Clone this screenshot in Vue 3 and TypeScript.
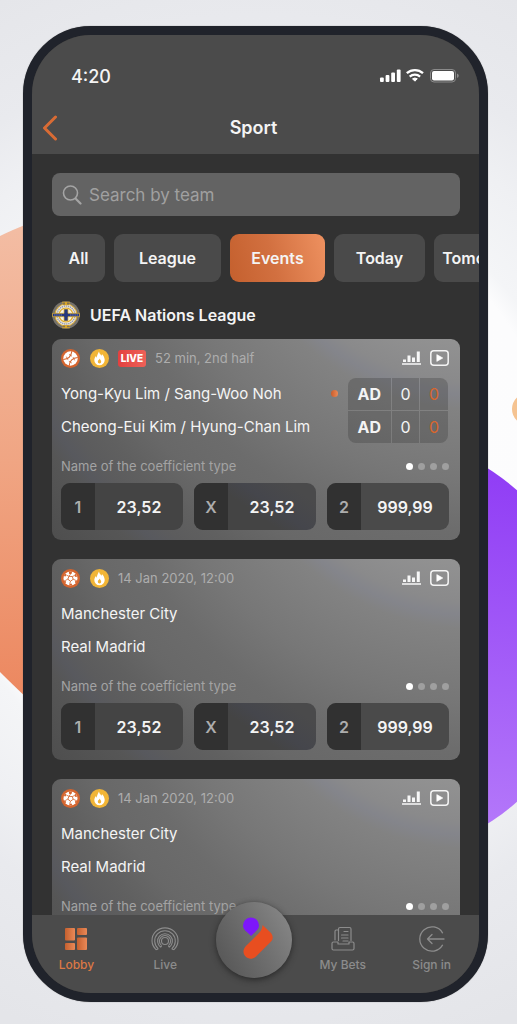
<script setup lang="ts">
import { ref } from 'vue'

interface Match {
  id: number
  sport: 'tennis' | 'football'
  live: boolean
  time: string
  teams: [string, string]
  scores: string[][]
}

interface Chip {
  label: string
  size: string
}

const chips: Chip[] = [
  { label: 'All', size: 'chip-xs' },
  { label: 'League', size: 'chip-lg' },
  { label: 'Events', size: 'chip-md' },
  { label: 'Today', size: 'chip-sm' },
  { label: 'Tomorrow', size: 'chip-md' },
]

const matches: Match[] = [
  {
    id: 1,
    sport: 'tennis',
    live: true,
    time: '52 min, 2nd half',
    teams: ['Yong-Kyu Lim / Sang-Woo Noh', 'Cheong-Eui Kim / Hyung-Chan Lim'],
    scores: [['AD', '0', '0'], ['AD', '0', '0']],
  },
  { id: 2, sport: 'football', live: false, time: '14 Jan 2020, 12:00', teams: ['Manchester City', 'Real Madrid'], scores: [] },
  { id: 3, sport: 'football', live: false, time: '14 Jan 2020, 12:00', teams: ['Manchester City', 'Real Madrid'], scores: [] },
]

const odds = [
  { key: '1', value: '23,52' },
  { key: 'X', value: '23,52' },
  { key: '2', value: '999,99' },
]

const activeChip = ref('Events')
const query = ref('')
</script>

<template>
  <div class="page">
    <svg class="backdrop" viewBox="0 0 517 1024" preserveAspectRatio="none" aria-hidden="true">
      <defs>
        <linearGradient id="peach" x1="0" y1="0" x2="0" y2="1">
          <stop offset="0" stop-color="#f3bda4" />
          <stop offset="0.5" stop-color="#f0a583" />
          <stop offset="1" stop-color="#ec875f" />
        </linearGradient>
        <linearGradient id="violet" gradientUnits="userSpaceOnUse" x1="520" y1="470" x2="480" y2="830">
          <stop offset="0" stop-color="#903df5" />
          <stop offset="1" stop-color="#b478fa" />
        </linearGradient>
      </defs>
      <path d="M0 236Q12 230 30 223V701Q12 684 0 672Z" fill="url(#peach)" />
      <circle cx="376" cy="646" r="210" fill="url(#violet)" />
      <circle cx="528" cy="409" r="16" fill="#f5c391" />
    </svg>

    <main class="phone">
      <header class="top">
        <div class="status">
          <span class="clock">4:20</span>
          <svg class="status-icons" width="80" height="16" viewBox="0 0 80 16" aria-hidden="true">
            <g fill="#fff">
              <rect x="1" y="9.500" width="3.800" height="4.500" rx="1" />
              <rect x="6.600" y="7" width="3.800" height="7" rx="1" />
              <rect x="12.200" y="4.500" width="3.800" height="9.500" rx="1" />
              <rect x="17.800" y="1.500" width="3.800" height="12.500" rx="1" />
              <path d="M33.500 10.800q2.400-1.600 4.800 0l-2.400 2.400z" stroke="#fff" stroke-width="1" stroke-linejoin="round" />
            </g>
            <g fill="none" stroke="#fff" stroke-width="2.300">
              <path d="M27.800 5.200a12 12 0 0 1 16.200 0" />
              <path d="M30.700 8.600a8 8 0 0 1 10.400 0" />
            </g>
            <rect x="51.500" y="1.500" width="25" height="12.500" rx="3.500" fill="none" stroke="#8a8a8a" />
            <rect x="53" y="3" width="22" height="9.500" rx="2" fill="#fff" />
            <path d="M78 5.500v4.500q1.800-.6 1.800-2.200T78 5.500z" fill="#8a8a8a" />
          </svg>
        </div>
        <div class="title-bar">
          <button class="back" type="button" aria-label="Back">
            <svg width="16" height="26" viewBox="0 0 16 26"><path d="M13.500 2L2.500 13l11 11" fill="none" stroke="#d96b34" stroke-width="3" stroke-linecap="round" stroke-linejoin="round" /></svg>
          </button>
          <h1>Sport</h1>
        </div>
      </header>

      <section class="content">
        <div class="search">
          <svg width="20" height="20" viewBox="0 0 20 20" fill="none" stroke="#a4a4a4" stroke-linecap="round" aria-hidden="true">
            <circle cx="8.500" cy="8" r="7" stroke-width="1.600" />
            <path d="M13.500 13.500l5 5" stroke-width="2.200" />
          </svg>
          <input v-model="query" type="text" placeholder="Search by team" aria-label="Search by team" />
        </div>

        <nav class="chips" aria-label="Filters">
          <button
            v-for="chip in chips"
            :key="chip.label"
            type="button"
            class="chip"
            :class="[chip.size, { active: chip.label === activeChip }]"
            @click="activeChip = chip.label"
          >{{ chip.label }}</button>
        </nav>

        <h2 class="league">
          <svg width="28" height="28" viewBox="0 0 28 28" aria-hidden="true">
            <circle cx="14" cy="14" r="13.800" fill="#77736c" />
            <circle cx="14" cy="14" r="11" fill="#e9e5da" stroke="#dda929" stroke-width="1" />
            <circle cx="14" cy="14" r="9" fill="none" stroke="#9c9cab" stroke-width="1.400" stroke-dasharray="1.300 .8" />
            <circle cx="14" cy="14" r="7" fill="#f6f1e4" stroke="#e2ab25" stroke-width="1.200" />
            <path d="M10 .8h8l-1.500 3.500h-5zM11.500 24h5l1.500 3.200h-8z" fill="#d9a629" />
            <path d="M11.500 1.500h1v2h-1zm4 0h1v2h-1zm-4 23.200h1v1.500h-1zm4 0h1v1.500h-1z" fill="#343e72" />
            <path d="M12 8h4v4.300h11.500v3.400H16V20h-4v-4.300H.5v-3.400H12z" fill="#26377e" stroke="#e6b62e" stroke-width=".7" />
            <path d="M2 14h8m8 0h8" stroke="#7780a9" stroke-width="1" stroke-dasharray="1.500 .7" />
          </svg>
          UEFA Nations League
        </h2>

        <div class="cards">
          <article v-for="match in matches" :key="match.id" class="card">
            <div class="meta">
              <svg v-if="match.sport === 'tennis'" width="19" height="19" viewBox="0 0 19 19" aria-label="Tennis">
                <circle cx="9.500" cy="9.500" r="9.500" fill="#d4652f" />
                <circle cx="9.500" cy="9.500" r="7.200" fill="#fff" />
                <g fill="none" stroke="#d4652f">
                  <path d="M2.300 10.500Q10 10 10.800 2.300M8.200 16.700Q9 9 16.700 8.500" stroke-width="1.100" />
                  <path d="M5.300 7.600l1.600 3.200M8 5.400l3 1.800M10.800 14l-3-1.800M13.700 11.400l-1.600-3.200" stroke-width=".8" />
                </g>
              </svg>
              <svg v-else width="19" height="19" viewBox="0 0 19 19" aria-label="Football">
                <circle cx="9.500" cy="9.500" r="9.500" fill="#d4652f" />
                <circle cx="9.500" cy="9.500" r="7" fill="#fff" />
                <g fill="#d4652f">
                  <path d="M8 7.300l3.300.2.900 2.800-2.700 1.900-2.700-2z" fill="#fff" stroke="#d4652f" stroke-width=".9" />
                  <path d="M8 2.600l3-.1-.2 2-1.500.9-1.400-.9zM14.300 4.500l2 3-1.600.5-1.500-1.300zM16.500 11.500l-1.700 3-.9-1.500.9-1.700zM11.500 16.400H8l.7-1.700 1.800-.2zM4.200 14.500l-1.800-3.200 1.800.2.900 1.500zM2.700 7l1.900-2.600.8 1.700-1 1.500z" />
                </g>
                <path d="M9.300 5.400L8 7.300M13.200 6.700l-1.900.8M14.800 11.300l-2.600-1M9.500 12.200l-.8 2.500M6.800 10.200l-2.600 1.300M8 7.300L5.400 6.100" stroke="#d4652f" stroke-width=".8" />
              </svg>
              <svg class="flame" width="19" height="19" viewBox="0 0 19 19" aria-label="Popular">
                <circle cx="9.500" cy="9.500" r="9.500" fill="#f1b537" />
                <path d="M9 2.500c.3 2.300 1.500 3 2.700 4.200.2-.6.300-1.200.2-1.700 1.700 1.700 2.800 3.900 2.800 6.100a5.200 5.200 0 0 1-10.400 0c0-1.800.9-3.200 1.700-4.200.1.900.3 1.400.7 1.800C7 6.500 8 4.500 9 2.500z" fill="#fff" />
                <path d="M9.700 9.600c.2 1.200 1.500 1.800 1.500 3.200a1.700 1.700 0 0 1-3.400 0c0-1.400 1.400-1.800 1.900-3.200z" fill="#f1b537" />
              </svg>
              <span v-if="match.live" class="live">LIVE</span>
              <time>{{ match.time }}</time>
              <div class="actions">
                <button type="button" aria-label="Statistics">
                  <svg width="19" height="16" viewBox="0 0 19 16" fill="#f7f7f7"><path d="M0 13.300h19v1.500H0zM1 9.500h3v2.500H1zM5.500 5.500h3V12h-3zM10 7.500h3V12h-3zM14.800 1.500h3V12h-3z" /></svg>
                </button>
                <button type="button" aria-label="Watch">
                  <svg width="19" height="16" viewBox="0 0 19 16"><rect x=".8" y=".8" width="17.400" height="14.400" rx="3" fill="none" stroke="#f4f4f4" stroke-width="1.500" /><path d="M6.800 4.600l6 3.400-6 3.400z" fill="#fff" stroke="#fff" stroke-width=".6" stroke-linejoin="round" /></svg>
                </button>
              </div>
            </div>

            <div class="duel">
              <ul class="teams">
                <li v-for="(team, index) in match.teams" :key="team">
                  {{ team }}<i v-if="match.live && index === 0" class="serve"></i>
                </li>
              </ul>
              <table v-if="match.scores.length" class="score">
                <tbody>
                  <tr v-for="(row, r) in match.scores" :key="r">
                    <td v-for="(cell, c) in row" :key="c">{{ cell }}</td>
                  </tr>
                </tbody>
              </table>
            </div>

            <div class="coefficient">
              <span>Name of the coefficient type</span>
              <span class="dots"><i class="on"></i><i></i><i></i><i></i></span>
            </div>

            <div class="odds">
              <button v-for="odd in odds" :key="odd.key" type="button" class="odd">
                <span class="odd-key">{{ odd.key }}</span>
                <span class="odd-value">{{ odd.value }}</span>
              </button>
            </div>
          </article>
        </div>
      </section>

      <nav class="tabs" aria-label="Main">
        <a href="#lobby" class="tab current">
          <svg width="28" height="28" viewBox="0 0 28 28" aria-hidden="true">
            <defs>
              <linearGradient id="ember" x1="0" y1="0" x2="1" y2="0">
                <stop offset="0" stop-color="#c5602f" />
                <stop offset="1" stop-color="#ea8957" />
              </linearGradient>
            </defs>
            <g fill="url(#ember)">
              <rect x="3" y="3" width="10" height="12.500" rx="1" />
              <rect x="15" y="3" width="10" height="7" rx="1" />
              <rect x="3" y="18" width="10" height="7" rx="1" />
              <rect x="15" y="12.500" width="10" height="12.500" rx="1" />
            </g>
          </svg>
          <span>Lobby</span>
        </a>
        <a href="#live" class="tab">
          <svg width="28" height="28" viewBox="0 0 28 28" fill="none" stroke="#8c8c8c" stroke-width="1.100" stroke-linejoin="round" aria-hidden="true">
            <circle cx="14" cy="16" r="3.500" />
            <path d="M9.700 22.200A7.400 7.400 0 1 1 18.300 22.200M10.700 20.600A5.600 5.600 0 1 1 17.300 20.600M10.700 20.600l-1 1.600M17.300 20.600l1 1.600" />
            <path d="M7.300 23.800A10.300 10.300 0 1 1 20.700 23.800M5.300 24.800A13 12.600 0 1 1 22.700 24.800M7.300 23.800l-2 1M20.700 23.800l2 1" />
          </svg>
          <span>Live</span>
        </a>
        <a href="#home" class="tab home" aria-label="Home">
          <svg width="76" height="76" viewBox="0 0 76 76" aria-hidden="true">
            <path d="M46.500 23l8.500 8q3.500 4.500 0 8.500L39.500 55c-7 5.500-15.500-3-10.500-9.800 1-1.400 2.800-3 4.500-4.700L43 31q3.500-3.500 3.500-8z" fill="#e84e20" />
            <path d="M35 34c-3.500-4-8-6-8-10.500a8 8 0 0 1 16 0c0 4.500-4.500 6.500-8 10.500z" fill="#7d17fa" />
          </svg>
        </a>
        <a href="#bets" class="tab">
          <svg width="28" height="28" viewBox="0 0 28 28" fill="none" stroke="#8c8c8c" stroke-width="1.200" stroke-linejoin="round" stroke-linecap="round" aria-hidden="true">
            <path d="M9 17H4.500q-1.500 0-1.500 1.500v5Q3 25 4.500 25h19q1.500 0 1.500-1.500v-5q0-1.500-1.500-1.500H20M9 17v2h11v-2" />
            <path d="M9.500 15.500V4Q9.500 2.500 11 2.500h9.500Q22 2.500 22 4v11.500M9.500 5H7.300Q6 5 6 6.500V15" />
            <path d="M15 6.500h4M12.500 10H19M12.500 13H19M14 16h5" />
          </svg>
          <span>My Bets</span>
        </a>
        <a href="#signin" class="tab">
          <svg width="28" height="28" viewBox="0 0 28 28" fill="none" stroke="#8c8c8c" stroke-width="1.300" stroke-linecap="round" stroke-linejoin="round" aria-hidden="true">
            <path d="M24.500 7.800a12.200 12.200 0 1 0 0 12.400M26 14H9.500M14 9.500L9.500 14l4.500 4.500" />
          </svg>
          <span>Sign in</span>
        </a>
      </nav>
    </main>
  </div>
</template>

<style>
body {
  margin: 0;
}
</style>

<style scoped>
* {
  box-sizing: border-box;
}

.page {
  position: relative;
  height: 100vh;
  padding: 26px 29px 22px 23px;
  overflow: hidden;
  font-family: Inter, "Liberation Sans", sans-serif;
  color: #f4f4f4;
  background: radial-gradient(circle at 50% 48%, #fdfdfd 0, #fcfcfd 300px, #f4f5f7 320px, #eff0f3 390px, #e9eaee 450px, #e4e5e9 580px);
}

.backdrop {
  position: absolute;
  inset: 0;
  width: 100%;
  height: 100%;
}

.phone {
  position: relative;
  display: flex;
  flex-direction: column;
  height: 100%;
  overflow: hidden;
  border: 9px solid #20232b;
  border-radius: 68px;
  background: #323232;
  box-shadow: 0 0 1px #666;
}

button {
  padding: 0;
  border: 0;
  background: none;
  color: inherit;
  font: inherit;
  cursor: pointer;
}

svg {
  display: block;
  flex: none;
}

.top {
  flex: none;
  padding-top: 26px;
  background: #4b4b4b;
}

.status {
  display: flex;
  align-items: center;
  justify-content: space-between;
  height: 30px;
  padding: 0 20px 0 39px;
}

.clock {
  font-size: 18px;
  font-weight: 500;
}

.title-bar {
  display: grid;
  grid-template-columns: 40px 1fr 44px;
  align-items: center;
  height: 63px;
  padding: 10px 0 0 0;
}

.back {
  padding: 0 0 0 10px;
}

h1 {
  margin: 0;
  text-align: center;
  font-size: 18px;
  font-weight: 600;
}

.content {
  flex: 1;
  min-height: 0;
  padding: 19px 19px 0 20px;
  overflow: hidden;
}

.search {
  display: flex;
  align-items: center;
  gap: 7px;
  height: 43px;
  padding: 0 11px 0 10px;
  border-radius: 8px;
  background: #636363;
}

.search input {
  flex: 1;
  min-width: 0;
  padding: 0;
  border: 0;
  outline: 0;
  background: none;
  color: #f4f4f4;
  font: 400 17px Inter, "Liberation Sans", sans-serif;
}

.search input::placeholder {
  color: #a0a0a0;
  opacity: 1;
}

.chips {
  display: flex;
  gap: 9px;
  margin: 18px -19px 0 0;
  overflow: hidden;
}

.chip {
  flex: none;
  height: 48px;
  border-radius: 9px;
  background: #4a4a4a;
  font-size: 16px;
  font-weight: 600;
}

.chip-xs { width: 53px; }
.chip-sm { width: 91px; }
.chip-md { width: 95px; }
.chip-lg { width: 107px; }

.chip.active {
  background: linear-gradient(75deg, #c4602e, #d27040 45%, #ee9160);
}

.league {
  display: flex;
  align-items: center;
  gap: 10px;
  height: 28px;
  margin: 19px 0 10px;
  font-size: 16px;
  font-weight: 600;
}

.cards {
  display: flex;
  flex-direction: column;
  gap: 19px;
}

.card {
  flex: none;
  padding: 9px 11px 10px 9px;
  border-radius: 9px;
  background: radial-gradient(circle at 420px -180px, #929292 180px, #8a8a8b 222px, #84858b 236px, #828282 250px, #777 320px, #6c6c6c 375px, #686868 420px, #606060 455px, #5c5c5d 480px, #58595e 496px, #565656 512px, #4d4d4d 575px);
}

.meta {
  display: flex;
  align-items: center;
  height: 20px;
}

.flame {
  margin-left: 10px;
}

.live {
  display: flex;
  align-items: center;
  justify-content: center;
  width: 28px;
  height: 17px;
  margin-left: 9px;
  border-radius: 3px;
  background: linear-gradient(90deg, #e3403f, #ee6158);
  color: #fff;
  font-size: 10px;
  font-weight: 800;
}

.meta time {
  margin-left: 9px;
  color: #adadad;
  font-size: 13px;
}

.actions {
  display: flex;
  gap: 9px;
  margin-left: auto;
}

.duel {
  display: flex;
  justify-content: space-between;
  height: 67px;
  margin-top: 9px;
}

.teams {
  flex: 1;
  margin: 0;
  padding: 0;
  list-style: none;
  white-space: nowrap;
  font-size: 15px;
}

.teams li {
  display: flex;
  align-items: center;
  justify-content: space-between;
  height: 33px;
  padding-right: 9px;
}

.serve {
  flex: none;
  width: 7px;
  height: 7px;
  border-radius: 50%;
  background: linear-gradient(90deg, #c95d2c, #ec8a56);
}

.score {
  width: 102px;
  border-spacing: 1px;
  border-radius: 9px;
  overflow: hidden;
  font-size: 16px;
  text-align: center;
}

.score td {
  width: 28px;
  padding: 0;
  background: rgba(50, 50, 50, 0.28);
}

.score td:first-child {
  width: 43px;
  font-weight: 700;
}

.score td:last-child {
  color: #d9662d;
}

.score tr:first-child td:first-child { border-top-left-radius: 8px; }
.score tr:first-child td:last-child { border-top-right-radius: 8px; }
.score tr:last-child td:first-child { border-bottom-left-radius: 8px; }
.score tr:last-child td:last-child { border-bottom-right-radius: 8px; }

.coefficient {
  display: flex;
  align-items: center;
  justify-content: space-between;
  height: 20px;
  margin: 12px 0 7px;
  color: #a3a3a3;
  font-size: 13px;
}

.dots {
  display: flex;
  gap: 5px;
}

.dots i {
  width: 7px;
  height: 7px;
  border-radius: 50%;
  background: #9f9f9f;
}

.dots .on {
  background: #fff;
}

.odds {
  display: grid;
  grid-template-columns: repeat(3, 1fr);
  gap: 11px;
}

.odd {
  display: flex;
  height: 47px;
  border-radius: 9px;
  overflow: hidden;
  background: #444;
  font-size: 16px;
  font-weight: 600;
}

.odd:nth-child(2) {
  background: linear-gradient(35deg, #444 45%, #45464c 60%, #4a4a4b 85%);
}

.odd:nth-child(3) {
  background: #4a4a4a;
}

.odd-key,
.odd-value {
  display: flex;
  align-items: center;
  justify-content: center;
  height: 100%;
}

.odd-key {
  width: 34px;
  background: #313131;
  color: #adadad;
}

.odd-value {
  flex: 1;
}

.tabs {
  position: relative;
  display: grid;
  grid-template-columns: repeat(5, 1fr);
  flex: none;
  height: 78px;
  padding-right: 3px;
  background: #4b4b4b;
}

.tab {
  display: flex;
  flex-direction: column;
  align-items: center;
  gap: 4px;
  padding-top: 10px;
  color: #8c8c8c;
  font-size: 12px;
  font-weight: 500;
  line-height: 15px;
  text-decoration: none;
}

.current {
  color: #dc7845;
}

.home {
  justify-self: center;
  align-self: start;
  width: 76px;
  height: 76px;
  margin-top: -13px;
  padding: 0;
  border-radius: 50%;
  background: linear-gradient(60deg, #525252, #707070 55%, #8b8b8b);
  box-shadow: 0 2px 6px #292929;
}
</style>
